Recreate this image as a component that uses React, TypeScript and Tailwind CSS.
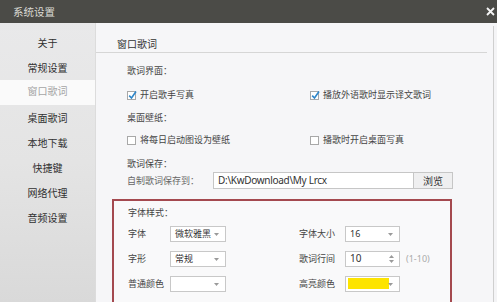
import React from 'react'

const menu = ['关于', '常规设置', '窗口歌词', '桌面歌词', '本地下载', '快捷键', '网络代理', '音频设置']

function CheckBox({ checked }: { checked?: boolean }) {
  return (
    <span className="relative w-[9px] h-[9px] border border-[#a8a8a8] bg-white shrink-0 mr-[4px]">
      {checked && (
        <svg className="absolute left-[0px] top-[-2px]" width="9" height="10" viewBox="0 0 9 10">
          <path d="M1.2 5.6 L3.5 8 L8 1.5" fill="none" stroke="#2f86c9" strokeWidth="1.6" />
        </svg>
      )}
    </span>
  )
}

function Arrow() {
  return (
    <svg className="absolute right-[6px] top-[6px]" width="5" height="3" viewBox="0 0 5 3">
      <path d="M0 0 L5 0 L2.5 3 Z" fill="#9a9a9a" />
    </svg>
  )
}

function Select({ value, width, color }: { value?: string; width: string; color?: boolean }) {
  return (
    <div className={"relative h-[16px] border border-[#c8c8c8] bg-white flex items-center pl-[4px] text-[9px] text-[#333] " + width}>
      {color && <div className="w-[41px] h-[11px] bg-[#fde400] ml-[-2px]" />}
      {value}
      <Arrow />
    </div>
  )
}

function Spin({ value }: { value: string }) {
  return (
    <div className="relative h-[16px] w-[55px] border border-[#c8c8c8] bg-white flex items-center pl-[4px] text-[10px] text-[#333] [font-family:'Noto_Sans',sans-serif]">
      {value}
      <svg className="absolute right-[5px] top-[2px]" width="5" height="10" viewBox="0 0 5 10">
        <path d="M0 4 L5 4 L2.5 1 Z" fill="#9a9a9a" />
        <path d="M0 6 L5 6 L2.5 9 Z" fill="#9a9a9a" />
      </svg>
    </div>
  )
}

function App() {
  return (
    <div className="w-[497px] h-[302px] overflow-hidden flex flex-col bg-[#f6f6f8] [font-family:'Noto_Sans_CJK_SC',sans-serif]">
      <div className="h-[23px] shrink-0 bg-[#4b4b47] flex items-center justify-between pl-[13px] pr-[2px]">
        <span className="text-[10.5px] text-[#dcdcd6]">系统设置</span>
        <svg width="9" height="9" viewBox="0 0 9 9">
          <path d="M1 1 L8 8 M8 1 L1 8" stroke="#f4f4f4" strokeWidth="1.8" />
        </svg>
      </div>

      <div className="flex-1 flex">
        <div className="w-[96px] shrink-0 pt-[7px] bg-gradient-to-b from-[#e9e9ea] via-[#e4e4e4] to-[#d9d9d9] border-r border-[#dcdcdc]">
          {menu.map((m, i) => (
            <div
              key={m}
              className={
                "h-[25px] flex items-center justify-center text-[10px] " +
                (i === 2 ? 'bg-[#fafafa] text-[#a5a5a5] pb-[4px]' : 'text-[#303030]')
              }
            >
              {m}
            </div>
          ))}
        </div>

        <div className="flex-1 flex flex-col text-[9px] text-[#444]">
          <div className="h-[30px] shrink-0 pt-[14px] pl-[21px] mr-[6px] border-b border-[#d6d6d6] text-[10px] leading-[14px] text-[#333]">
            窗口歌词
          </div>

          <div className="pl-[31px] pt-[6px]">
            <div className="h-[24px] flex items-center">歌词界面：</div>
            <div className="h-[24px] grid grid-cols-[183px_1fr] items-center">
              <div className="flex items-center"><CheckBox checked />开启歌手写真</div>
              <div className="flex items-center"><CheckBox checked />播放外语歌时显示译文歌词</div>
            </div>
            <div className="h-[22px] flex items-center">桌面壁纸：</div>
            <div className="h-[22px] grid grid-cols-[183px_1fr] items-center">
              <div className="flex items-center"><CheckBox />将每日启动图设为壁纸</div>
              <div className="flex items-center"><CheckBox />播歌时开启桌面写真</div>
            </div>
            <div className="h-[21px] pt-[4px] flex items-center">歌词保存：</div>
            <div className="h-[17px] flex items-center">
              <span className="w-[86px] text-[#666]">自制歌词保存到：</span>
              <div className="w-[201px] h-[17px] border border-[#c6c6c6] bg-white flex items-center pl-[4px] text-[10px] tracking-[-0.3px] text-[#333] [font-family:'Noto_Sans',sans-serif]">
                D:\KwDownload\My Lrcx
              </div>
              <div className="w-[39px] h-[17px] border border-l-0 border-[#c6c6c6] bg-[#efeff0] flex items-center justify-center text-[10px] text-[#333]">
                浏览
              </div>
            </div>
          </div>

          <div className="mt-[10px] ml-[16px] w-[340px] flex-1 border-2 border-b-0 border-[#a4494f] bg-[#f9f9fa] pl-[14px]">
            <div className="h-[20px] pt-[4px] flex items-center">字体样式：</div>
            <div className="h-[25px] flex items-center">
              <span className="w-[42px]">字体</span>
              <Select value="微软雅黑" width="w-[56px]" />
              <span className="w-[73px]" />
              <span className="w-[46px]">字体大小</span>
              <div className="[font-family:'Noto_Sans',sans-serif]">
                <Select value="16" width="w-[55px]" />
              </div>
            </div>
            <div className="h-[25px] flex items-center">
              <span className="w-[42px]">字形</span>
              <Select value="常规" width="w-[56px]" />
              <span className="w-[73px]" />
              <span className="w-[46px]">歌词行间</span>
              <Spin value="10" />
              <span className="ml-[6px] text-[#aaa] [font-family:'Noto_Sans',sans-serif]">(1-10)</span>
            </div>
            <div className="h-[25px] flex items-center">
              <span className="w-[42px]">普通颜色</span>
              <Select width="w-[56px]" />
              <span className="w-[73px]" />
              <span className="w-[46px]">高亮颜色</span>
              <Select width="w-[55px]" color />
            </div>
          </div>
        </div>

        <div className="w-[4px] shrink-0 border-l border-[#cfcfcf] bg-[#f4f4f6] mt-[3px]" />
      </div>
    </div>
  )
}

export default App
